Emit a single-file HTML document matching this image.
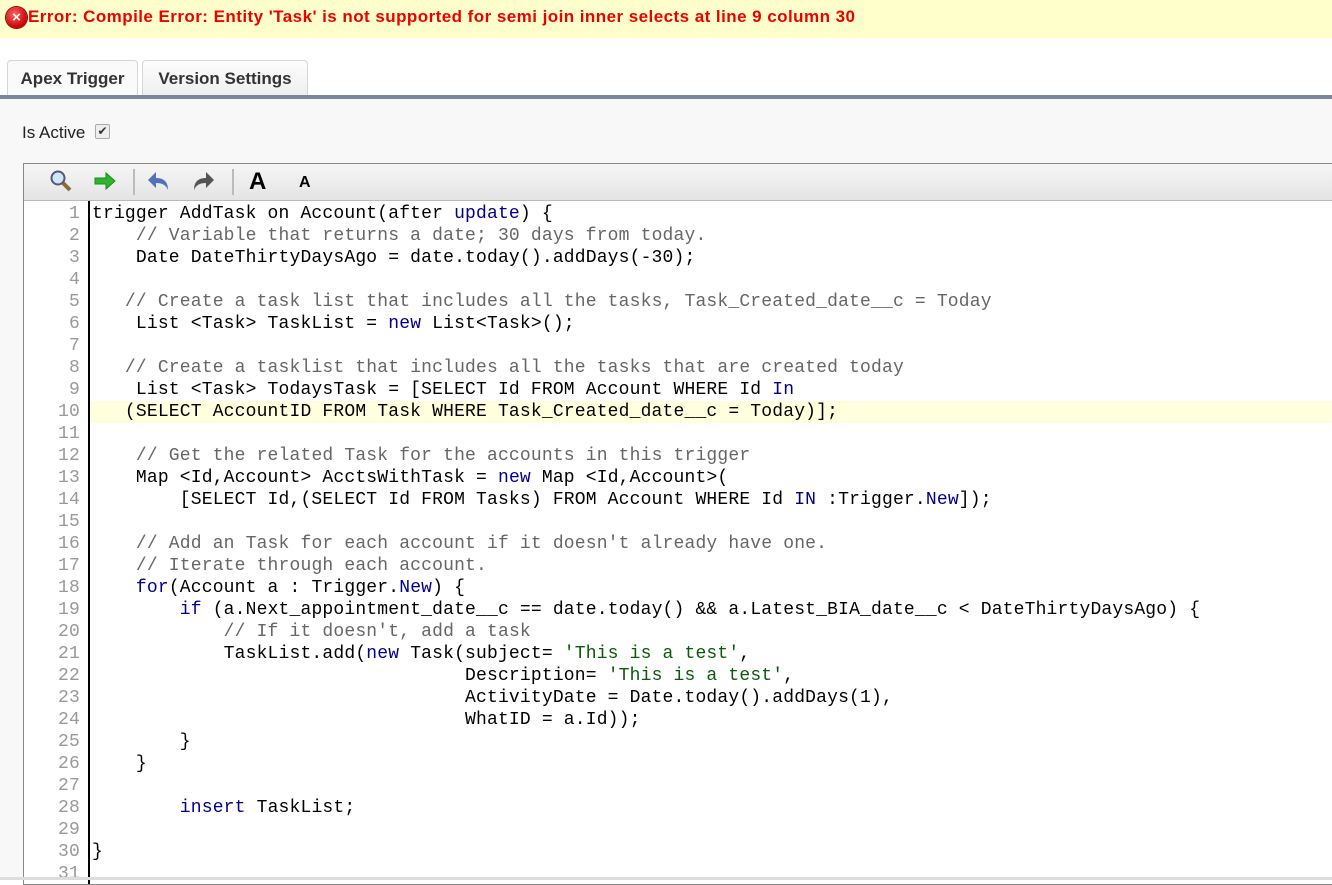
<!DOCTYPE html>
<html><head><meta charset="utf-8"><style>
html,body{margin:0;padding:0;width:1332px;height:880px;overflow:hidden;background:#fff;font-family:"Liberation Sans",Arial,sans-serif}
.err{position:absolute;left:0;top:0;width:1332px;height:38px;background:#ffffcc;}
.err span{position:absolute;left:28px;top:7px;color:#e00;font-weight:bold;font-size:17px;letter-spacing:0.45px}
.err .ic{position:absolute;left:6px;top:7px;width:21px;height:21px;border-radius:50%;background:radial-gradient(circle at 40% 35%,#f66,#c00 70%);box-shadow:0 0 0 1px #800;color:#fff;font-weight:bold;font-size:15px;line-height:21px;text-align:center}
.tab{position:absolute;top:0;height:36px;border:1px solid #d6d6d6;border-bottom:none;border-radius:4px 4px 0 0;background:linear-gradient(#fdfdfd,#eee);font-weight:bold;font-size:17px;color:#333;line-height:36px;text-align:center}
.bar{position:absolute;top:95px;left:0;width:1332px;height:4px;background:#7b8799}
.main{position:absolute;top:99px;left:0;width:1332px;height:779px;background:#f8f8f8}
.act{position:absolute;left:22px;top:123px;font-size:17px;color:#222}
.cb{position:absolute;left:95px;top:124px;width:13px;height:13px;border:1px solid #aaa;border-radius:2px;background:#eee;font-size:12px;line-height:13px;text-align:center;color:#333}
.ed{position:absolute;left:23px;top:163px;width:1320px;height:720px;border:1px solid #888;background:#fff;overflow:hidden}
.tb{height:36px;background:linear-gradient(#f6f6f6,#e4e4e4);border-bottom:1px solid #bbb;position:relative}
.sep{position:absolute;top:5px;width:2px;height:26px;background:#bbb}
.gut{position:absolute;left:0;top:37px;width:64px;height:700px;border-right:2px solid #000;background:#fff}
.code{position:absolute;left:0;top:39px;width:1320px;font-family:"Liberation Mono",monospace;font-size:18px;line-height:22px;letter-spacing:0.17px}
.ln{display:flex;height:22px}
.n{width:56px;text-align:right;color:#999;padding-right:10px;flex:none}
.t{white-space:pre;padding-left:2px;color:#000;flex:1}
.hl .t{background:#ffffdd}
.c{color:#666}.k{color:#00008b}.s{color:#0a5a0a}
.bot{position:absolute;left:0;top:877px;width:1332px;height:3px;background:#ddd}
</style></head><body>
<div class="err"><div class="ic">×</div><span>Error: Compile Error: Entity 'Task' is not supported for semi join inner selects at line 9 column 30</span></div>
<div class="tab" style="left:7px;top:60px;width:129px;background:#fafafa">Apex Trigger</div>
<div class="tab" style="left:142px;top:60px;width:164px">Version Settings</div>
<div class="bar"></div>
<div class="main"></div>
<div class="act">Is Active</div><div class="cb">✔</div>
<div class="ed">
<div class="tb">
<svg style="position:absolute;left:25px;top:5px" width="24" height="24"><circle cx="9" cy="9" r="6.5" fill="#cfe6f7" stroke="#557" stroke-width="2"/><path d="M14 14 L21 21" stroke="#8a6a3a" stroke-width="4"/></svg>
<svg style="position:absolute;left:69px;top:6px" width="24" height="22"><path d="M2 8h11V3l9 8-9 8v-5H2z" fill="#2db52d" stroke="#1a8a1a"/></svg>
<div class="sep" style="left:109px"></div>
<svg style="position:absolute;left:122px;top:5px" width="26" height="24"><path d="M10 3L2 11l8 8v-5c6 0 10 2 12 7 0-8-4-12-12-12z" fill="#5470b8"/></svg>
<svg style="position:absolute;left:166px;top:5px" width="26" height="24"><path d="M16 3l8 8-8 8v-5c-6 0-10 2-12 7 0-8 4-12 12-12z" fill="#555"/></svg>
<div class="sep" style="left:208px"></div>
<div style="position:absolute;left:225px;top:4px;font-weight:bold;font-size:24px">A</div>
<div style="position:absolute;left:275px;top:10px;font-weight:bold;font-size:16px">A</div>
</div>
<div class="gut"></div>
<div class="code">
<div class="ln"><div class="n">1</div><div class="t">trigger AddTask on Account(after <span class="k">update</span>) {</div></div>
<div class="ln"><div class="n">2</div><div class="t">    <span class="c">// Variable that returns a date; 30 days from today.</span></div></div>
<div class="ln"><div class="n">3</div><div class="t">    Date DateThirtyDaysAgo = date.today().addDays(-30);</div></div>
<div class="ln"><div class="n">4</div><div class="t"> </div></div>
<div class="ln"><div class="n">5</div><div class="t">   <span class="c">// Create a task list that includes all the tasks, Task_Created_date__c = Today</span></div></div>
<div class="ln"><div class="n">6</div><div class="t">    List &lt;Task&gt; TaskList = <span class="k">new</span> List&lt;Task&gt;();</div></div>
<div class="ln"><div class="n">7</div><div class="t"> </div></div>
<div class="ln"><div class="n">8</div><div class="t">   <span class="c">// Create a tasklist that includes all the tasks that are created today</span></div></div>
<div class="ln"><div class="n">9</div><div class="t">    List &lt;Task&gt; TodaysTask = [SELECT Id FROM Account WHERE Id <span class="k">In</span></div></div>
<div class="ln hl"><div class="n">10</div><div class="t">   (SELECT AccountID FROM Task WHERE Task_Created_date__c = Today)];</div></div>
<div class="ln"><div class="n">11</div><div class="t"> </div></div>
<div class="ln"><div class="n">12</div><div class="t">    <span class="c">// Get the related Task for the accounts in this trigger</span></div></div>
<div class="ln"><div class="n">13</div><div class="t">    Map &lt;Id,Account&gt; AcctsWithTask = <span class="k">new</span> Map &lt;Id,Account&gt;(</div></div>
<div class="ln"><div class="n">14</div><div class="t">        [SELECT Id,(SELECT Id FROM Tasks) FROM Account WHERE Id <span class="k">IN</span> :Trigger.<span class="k">New</span>]);</div></div>
<div class="ln"><div class="n">15</div><div class="t"> </div></div>
<div class="ln"><div class="n">16</div><div class="t">    <span class="c">// Add an Task for each account if it doesn't already have one.</span></div></div>
<div class="ln"><div class="n">17</div><div class="t">    <span class="c">// Iterate through each account.</span></div></div>
<div class="ln"><div class="n">18</div><div class="t">    <span class="k">for</span>(Account a : Trigger.<span class="k">New</span>) {</div></div>
<div class="ln"><div class="n">19</div><div class="t">        <span class="k">if</span> (a.Next_appointment_date__c == date.today() &amp;&amp; a.Latest_BIA_date__c &lt; DateThirtyDaysAgo) {</div></div>
<div class="ln"><div class="n">20</div><div class="t">            <span class="c">// If it doesn't, add a task</span></div></div>
<div class="ln"><div class="n">21</div><div class="t">            TaskList.add(<span class="k">new</span> Task(subject= <span class="s">'This is a test'</span>,</div></div>
<div class="ln"><div class="n">22</div><div class="t">                                  Description= <span class="s">'This is a test'</span>,</div></div>
<div class="ln"><div class="n">23</div><div class="t">                                  ActivityDate = Date.today().addDays(1),</div></div>
<div class="ln"><div class="n">24</div><div class="t">                                  WhatID = a.Id));</div></div>
<div class="ln"><div class="n">25</div><div class="t">        }</div></div>
<div class="ln"><div class="n">26</div><div class="t">    }</div></div>
<div class="ln"><div class="n">27</div><div class="t"> </div></div>
<div class="ln"><div class="n">28</div><div class="t">        <span class="k">insert</span> TaskList;</div></div>
<div class="ln"><div class="n">29</div><div class="t"> </div></div>
<div class="ln"><div class="n">30</div><div class="t">}</div></div>
<div class="ln"><div class="n">31</div><div class="t"> </div></div>
</div>
</div>
<div class="bot"></div>
</body></html>
